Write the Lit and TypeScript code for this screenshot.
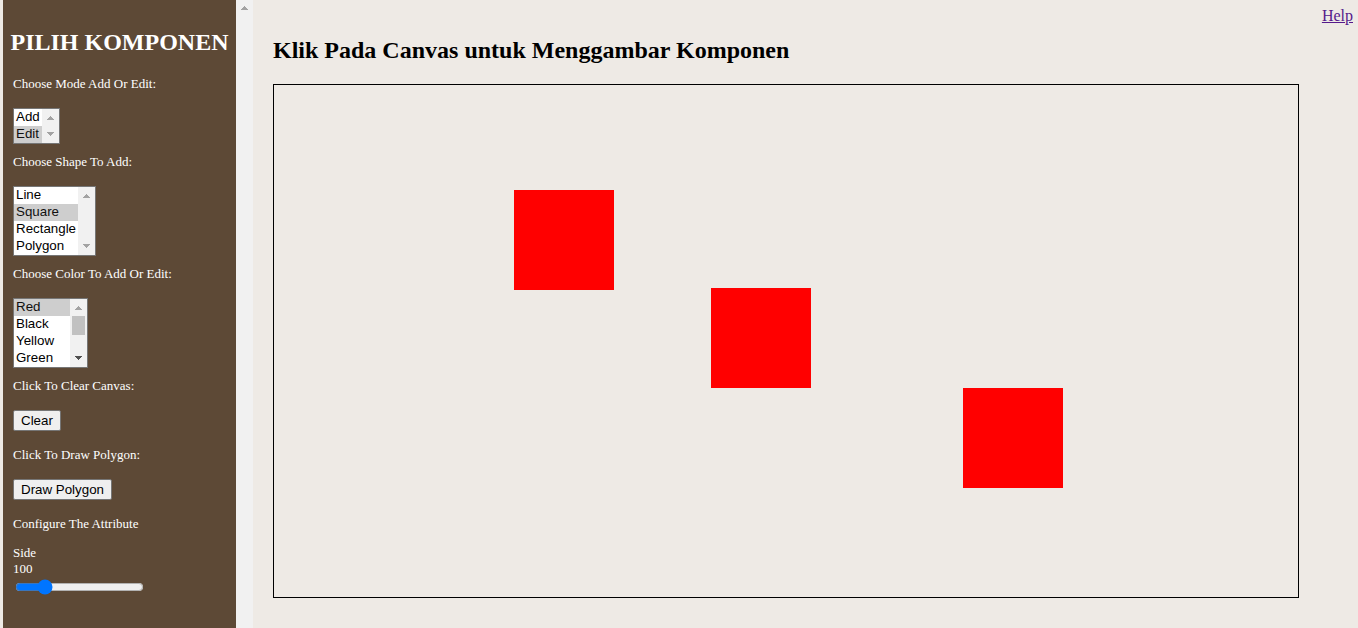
import { LitElement, html, css, svg } from "lit";
import { customElement, property, state } from "lit/decorators.js";

@customElement("list-box")
class ListBox extends LitElement {
  @property() name = "";
  @property() label = "";
  @property() value = "";
  @property({ type: Array }) options: string[] = [];
  @property({ type: Number }) rows = 4;

  static styles = css`
    :host { display: block; }
    .caption { display: block; line-height: 15px; margin-bottom: 17px; }
    .frame {
      display: inline-flex;
      vertical-align: top;
      border: 1px solid #767676;
      background: #fff;
    }
    .list {
      font-family: "Liberation Sans", Arial, sans-serif;
      border: 0;
      border-radius: 0;
      margin: 0;
      padding: 0;
      outline: 0;
      color: #000;
      background: #fff;
      scrollbar-width: none;
    }
    .list::-webkit-scrollbar { display: none; }
    .item { padding: 0 2px 1px; min-height: 16px; line-height: 16px; }
    .item:checked { background: linear-gradient(#cecece, #cecece); color: #101010; }
    .track { display: flex; flex-direction: column; width: 17px; background: #f1f1f1; }
    .arrow { display: block; width: 17px; height: 17px; fill: #a3a3a3; }
    .arrow.active { fill: #505050; }
    .rail { flex: 1; padding: 0 2px; }
    .thumb { height: 19px; background: #c1c1c1; }
  `;

  private change(e: Event) {
    this.value = (e.target as HTMLSelectElement).value;
    this.dispatchEvent(new CustomEvent("pick", { detail: this.value }));
  }

  render() {
    const scrolls = this.options.length > this.rows;
    return html`
      <label class="caption" for=${this.name}>${this.label}</label>
      <div class="frame">
        <select class="list" id=${this.name} size=${this.rows} @change=${this.change}>
          ${this.options.map(
            (o) => html`<option class="item" ?selected=${o === this.value}>${o}</option>`
          )}
        </select>
        <div class="track" aria-hidden="true">
          <svg class="arrow" viewBox="0 0 17 17" shape-rendering="crispEdges"><path d="M8 7h1v1h1v1h1v1h1v1H5v-1h1V9h1V8h1z" /></svg>
          <div class="rail">${scrolls ? html`<div class="thumb"></div>` : ""}</div>
          <svg class="arrow ${scrolls ? "active" : ""}" viewBox="0 0 17 17" shape-rendering="crispEdges"><path d="M5 6h7v1h-1v1h-1v1H9v1H8V9H7V8H6V7H5z" /></svg>
        </div>
      </div>
    `;
  }
}

interface Square { x: number; y: number; side: number; color: string; }

@customElement("app-root")
class AppRoot extends LitElement {
  @state() private side = 100;
  @state() private mode = "Edit";
  @state() private color = "Red";
  @state() private squares: Square[] = [
    { x: 240, y: 105, side: 100, color: "red" },
    { x: 437, y: 203, side: 100, color: "red" },
    { x: 689, y: 303, side: 100, color: "red" },
  ];

  static styles = css`
    :host {
      display: flex;
      min-height: 100vh;
      box-sizing: border-box;
      padding-left: 3px;
      background: #eeeae5;
      color: #000;
      font-family: "Liberation Serif", "Times New Roman", serif;
      font-size: 16px;
    }
    .side { display: flex; flex: 0 0 250px; }
    .panel {
      flex: 1;
      box-sizing: border-box;
      padding: 28px 0 16px;
      background: #5d4936;
      color: #fff;
      font-size: 13px;
      line-height: 15px;
    }
    .title {
      margin: 0 0 20px;
      font-size: 24px;
      line-height: 28px;
      text-align: center;
      white-space: nowrap;
    }
    .form { display: flex; flex-direction: column; gap: 16px; padding: 0 10px; }
    .lists { display: flex; flex-direction: column; gap: 10px; margin-bottom: -6px; }
    .text { display: block; margin: 0 0 17px; }
    .button {
      display: block;
      box-sizing: border-box;
      height: 21px;
      margin: 0;
      padding: 0 7px;
      border: 1px solid #767676;
      border-radius: 2px;
      background: #efefef;
      color: #000;
      font-family: "Liberation Sans", Arial, sans-serif;
    }
    .attribute { display: flex; flex-direction: column; align-items: flex-start; gap: 1px; }
    .heading { margin: 0 0 13px; }
    .slider { width: 129px; height: 16px; margin: 2px; accent-color: #0075ff; }
    .scroll { width: 17px; background: #f1f1f1; }
    .arrow { display: block; width: 17px; height: 17px; fill: #a3a3a3; }
    .main { flex: 1; min-width: 0; }
    .nav { height: 36px; box-sizing: border-box; padding: 7px 5px 0; text-align: right; line-height: 18px; }
    .help { color: #551a8b; }
    .work { padding: 0 59px 30px 20px; }
    .subtitle { margin: 0 0 20px; font-size: 24px; line-height: 28px; }
    .canvas { display: block; box-sizing: border-box; width: 100%; border: 1px solid #000; }
  `;

  private draw(e: MouseEvent) {
    if (this.mode !== "Add") return;
    const box = (e.currentTarget as Element).getBoundingClientRect();
    const k = 1024 / box.width;
    this.squares = [
      ...this.squares,
      {
        x: (e.clientX - box.left) * k - this.side / 2,
        y: (e.clientY - box.top) * k - this.side / 2,
        side: this.side,
        color: this.color.toLowerCase(),
      },
    ];
  }

  render() {
    return html`
      <aside class="side">
        <div class="panel">
          <h1 class="title">PILIH KOMPONEN</h1>
          <div class="form">
            <div class="lists">
              <list-box name="mode" label="Choose Mode Add Or Edit:" rows="2" .options=${["Add", "Edit"]}
                value="Edit" @pick=${(e: CustomEvent) => (this.mode = e.detail)}></list-box>
              <list-box name="shape" label="Choose Shape To Add:" value="Square"
                .options=${["Line", "Square", "Rectangle", "Polygon"]}></list-box>
              <list-box name="color" label="Choose Color To Add Or Edit:" value="Red"
                .options=${["Red", "Black", "Yellow", "Green", "Blue", "Cyan", "Magenta"]}
                @pick=${(e: CustomEvent) => (this.color = e.detail)}></list-box>
            </div>
            <div>
              <label class="text" for="clear">Click To Clear Canvas:</label>
              <button class="button" id="clear" aria-label="Clear" @click=${() => (this.squares = [])}>Clear</button>
            </div>
            <div>
              <label class="text" for="polygon">Click To Draw Polygon:</label>
              <button class="button" id="polygon" aria-label="Draw Polygon">Draw Polygon</button>
            </div>
            <div class="attribute">
              <p class="heading">Configure The Attribute</p>
              <label for="size">Side</label>
              <output for="size">${this.side}</output>
              <input class="slider" id="size" type="range" min="1" max="500" .value=${String(this.side)}
                @input=${(e: Event) => (this.side = Number((e.target as HTMLInputElement).value))} />
            </div>
          </div>
        </div>
        <div class="scroll" aria-hidden="true">
          <svg class="arrow" viewBox="0 0 17 17" shape-rendering="crispEdges"><path d="M8 6h1v1h1v1h1v1h1v1H5V9h1V8h1V7h1z" /></svg>
        </div>
      </aside>
      <main class="main">
        <nav class="nav"><a class="help" href="#help">Help</a></nav>
        <section class="work">
          <h2 class="subtitle">Klik Pada Canvas untuk Menggambar Komponen</h2>
          <svg class="canvas" viewBox="0 0 1024 512" @click=${this.draw}>
            ${this.squares.map(
              (s) => svg`<rect x=${s.x} y=${s.y} width=${s.side} height=${s.side} fill=${s.color} />`
            )}
          </svg>
        </section>
      </main>
    `;
  }
}
